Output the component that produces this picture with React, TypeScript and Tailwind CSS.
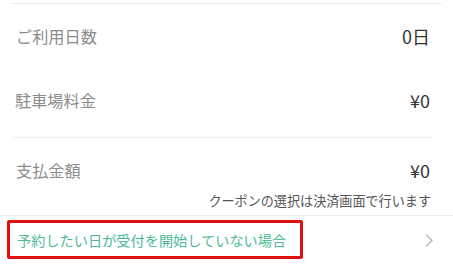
import React from "react";

const font = { fontFamily: '"Noto Sans CJK JP", "Noto Sans", sans-serif' };

export default function App() {
  return (
    <div
      className="w-[453px] h-[264px] bg-white overflow-hidden flex flex-col"
      style={font}
    >
      <div className="mt-[3px] ml-[10px] w-[432px] h-px bg-[#eeeeee]" />
      <div className="h-[64px] flex items-center justify-between pl-[16px] pr-[23px]">
        <span className="text-[16.2px] leading-[20px] text-[#8c8c8c]">ご利用日数</span>
        <span className="text-[18px] leading-[20px] text-[#333333]">0日</span>
      </div>
      <div className="h-[69px] pb-[5px] flex items-center justify-between pl-[15px] pr-[23px]">
        <span className="text-[16.2px] leading-[20px] text-[#8c8c8c]">駐車場料金</span>
        <span className="text-[18px] leading-[20px] text-[#333333]">¥0</span>
      </div>
      <div className="ml-[13px] w-[419px] h-px bg-[#eeeeee]" />
      <div className="h-[54px] pt-[10px] flex items-center justify-between pl-[16px] pr-[23px]">
        <span className="text-[16.2px] leading-[20px] text-[#8c8c8c]">支払金額</span>
        <span className="text-[18px] leading-[20px] text-[#333333]">¥0</span>
      </div>
      <div className="h-[18px] flex items-center justify-end pr-[22px]">
        <span className="text-[13.1px] leading-[18px] text-[#555555]">
          クーポンの選択は決済画面で行います
        </span>
      </div>
      <div className="mt-[5px] w-full h-px bg-[#eeeeee]" />
      <div className="relative h-[48px] flex items-center justify-between pl-[17px] pr-[19px]">
        <span className="text-[14.2px] leading-[18px] text-[#4dba96]">
          予約したい日が受付を開始していない場合
        </span>
        <svg width="9" height="13" viewBox="0 0 9 13" fill="none">
          <polyline
            points="1.5,1 7,6.5 1.5,12"
            stroke="#bdbdbd"
            strokeWidth="1.6"
            strokeLinecap="round"
            strokeLinejoin="round"
          />
        </svg>
        <div className="absolute left-[7px] top-[4px] w-[296px] h-[39px] border-[3px] border-[#e01010] rounded-[2px] pointer-events-none" />
      </div>
    </div>
  );
}
